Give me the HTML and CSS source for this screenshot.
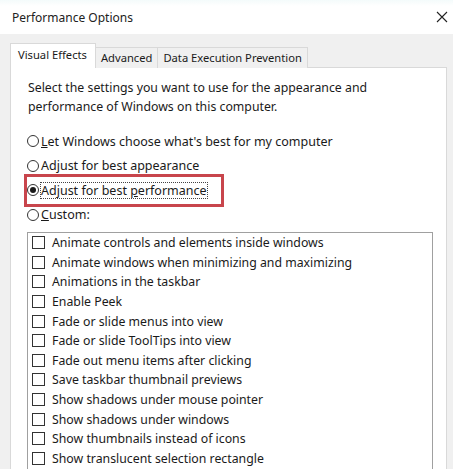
FILE: index.html
```html
<!DOCTYPE html>
<html>
<head>
<meta charset="utf-8">
<link rel="stylesheet" href="styles.css">
</head>
<body>
<div class="window">
  <div class="titlebar">
    <span class="title">Performance Options</span>
    <svg class="close" width="12" height="12" viewBox="0 0 12 12"><path d="M1 1 L11 11 M11 1 L1 11" stroke="#222" stroke-width="1.1" fill="none"/></svg>
  </div>
  <div class="dialog">
    <div class="tabs">
      <div class="tab active">Visual Effects</div>
      <div class="tab">Advanced</div>
      <div class="tab">Data Execution Prevention</div>
    </div>
    <div class="panel">
      <p class="intro">Select the settings you want to use for the appearance and performance of Windows on this computer.</p>
      <div class="radios">
        <div class="radio"><span class="dot"></span><span><u>L</u>et Windows choose what's best for my computer</span></div>
        <div class="radio"><span class="dot"></span><span>Adjust for best appearance</span></div>
        <div class="radio highlight"><span class="dot checked"></span><span class="focus">Adjust for best <u>p</u>erformance</span></div>
        <div class="radio"><span class="dot"></span><span><u>C</u>ustom:</span></div>
      </div>
      <div class="listbox">
        <div class="item"><span class="box"></span>Animate controls and elements inside windows</div>
        <div class="item"><span class="box"></span>Animate windows when minimizing and maximizing</div>
        <div class="item"><span class="box"></span>Animations in the taskbar</div>
        <div class="item"><span class="box"></span>Enable Peek</div>
        <div class="item"><span class="box"></span>Fade or slide menus into view</div>
        <div class="item"><span class="box"></span>Fade or slide ToolTips into view</div>
        <div class="item"><span class="box"></span>Fade out menu items after clicking</div>
        <div class="item"><span class="box"></span>Save taskbar thumbnail previews</div>
        <div class="item"><span class="box"></span>Show shadows under mouse pointer</div>
        <div class="item"><span class="box"></span>Show shadows under windows</div>
        <div class="item"><span class="box"></span>Show thumbnails instead of icons</div>
        <div class="item"><span class="box"></span>Show translucent selection rectangle</div>
      </div>
    </div>
  </div>
</div>
</body>
</html>
```
FILE: styles.css
```css
* { box-sizing: border-box; }
html, body {
  margin: 0;
  padding: 0;
  width: 453px;
  height: 469px;
  overflow: hidden;
  background: #f0f0f0;
}
body {
  font-family: "Noto Sans", "Open Sans", sans-serif;
  font-size: 12.3px;
  color: #1a1a1a;
}
.window {
  display: flex;
  flex-direction: column;
  height: 469px;
}
.titlebar {
  height: 34px;
  flex: none;
  background: linear-gradient(#f4fbfb, #ffffff 6px);
  display: flex;
  align-items: center;
  justify-content: space-between;
  padding: 0 5px 0 12px;
}
.title {
  font-size: 12px;
  color: #222;
}
.close { display: block; }
.dialog {
  flex: 1;
  display: flex;
  flex-direction: column;
  padding: 10px 6px 0 10px;
  min-height: 0;
}
.tabs {
  display: flex;
  align-items: flex-end;
  height: 24px;
  flex: none;
  position: relative;
  z-index: 1;
  margin-bottom: -1px;
  font-size: 11.2px;
}
.tab {
  height: 21px;
  padding: 0 5px;
  border: 1px solid #d9d9d9;
  border-bottom: none;
  border-left: none;
  background: #f0f0f0;
  display: flex;
  align-items: center;
  color: #1a1a1a;
  line-height: 1;
}
.tab.active {
  height: 25px;
  padding: 0 8px 3px 7px;
  background: #fff;
  border-left: 1px solid #d9d9d9;
}
.panel {
  flex: 1;
  background: #fff;
  border: 1px solid #d9d9d9;
  border-bottom: none;
  padding: 10px 13px 0 16px;
  display: flex;
  flex-direction: column;
  min-height: 0;
}
.intro {
  margin: 0 0 0 1px;
  line-height: 19px;
  width: 380px;
}
.radios {
  margin-top: 13px;
  display: flex;
  flex-direction: column;
  font-size: 12.5px;
}
.radio {
  height: 24.5px;
  display: flex;
  align-items: center;
  gap: 1px;
  position: relative;
  align-self: flex-start;
}
.dot {
  width: 12px;
  height: 12px;
  border: 1px solid #333;
  border-radius: 50%;
  margin-right: 1px;
  flex: none;
  display: flex;
  align-items: center;
  justify-content: center;
}
.dot.checked::before {
  content: "";
  width: 6px;
  height: 6px;
  border-radius: 50%;
  background: #1a1a1a;
}
.focus {
  outline: 1px dotted #444;
  outline-offset: 0;
  line-height: 15px;
}
.highlight::after {
  content: "";
  position: absolute;
  left: -3px;
  right: -17px;
  top: -4px;
  bottom: -4px;
  border: 3px solid #c8454c;
}
.listbox {
  margin-top: 5px;
  border: 1px solid #a0a0a0;
  border-bottom: none;
  flex: 1;
  padding: 0 0 0 4px;
  overflow: hidden;
  min-height: 0;
}
.item {
  height: 19.6px;
  display: flex;
  align-items: center;
  white-space: nowrap;
}
.box {
  width: 13px;
  height: 13px;
  border: 1px solid #333;
  margin-right: 7px;
  flex: none;
}
```
